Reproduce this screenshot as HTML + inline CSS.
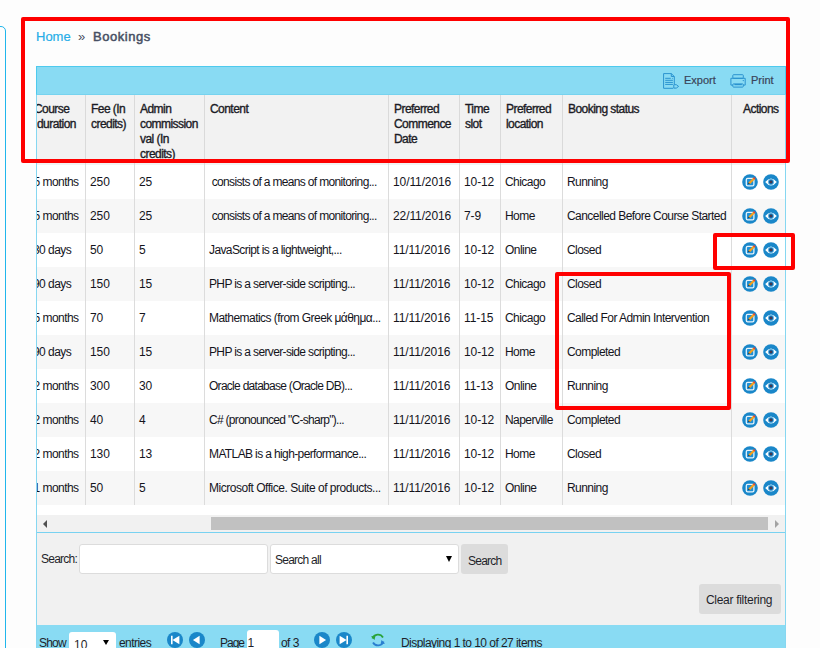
<!DOCTYPE html>
<html><head><meta charset="utf-8">
<style>
*{box-sizing:border-box;margin:0;padding:0}
html,body{width:820px;height:648px;overflow:hidden;background:#fdfdfd;font-family:"Liberation Sans",sans-serif;color:#1f1f2a}
#leftpanel{position:absolute;left:-100px;top:26px;width:106px;height:700px;border:1px solid #20b6ec;border-radius:5px}
#crumb{position:absolute;left:36px;top:29px;font-size:13px;line-height:16px;white-space:nowrap}
#crumb span{position:absolute;top:0}
#box{position:absolute;left:36px;top:66px;width:750px;height:600px;border:1px solid #86d7f1;background:#fff}
#toolbar{position:absolute;left:-1px;top:-1px;width:750px;height:29px;background:#89dbf3;border:1px solid #4ecaee;border-bottom-color:#76d3ef}
.tb{position:absolute;top:7px;font-size:11px;line-height:13px;color:#3a4458;-webkit-text-stroke:0.2px #3a4458;white-space:nowrap}
#viewport{position:absolute;left:0;top:28px;width:748px;height:420px;overflow:hidden;background:#fff}
table{position:absolute;left:-12px;top:0;width:764px;border-collapse:collapse;table-layout:fixed;font-size:12px;letter-spacing:-0.55px}
th{background:#f2f2f2;text-align:left;vertical-align:top;font-weight:normal;padding:6.5px 3px 0 5px;-webkit-text-stroke:0.35px #1b1b25;height:70px;line-height:15px;border-left:1px solid #dadada;color:#1b1b25}
td{height:34px;padding:0 4px;border-left:1px solid #dcdcdc;white-space:nowrap;overflow:hidden;line-height:15px;color:#14141c}
td.n{letter-spacing:-0.1px}
tr.g td{background:#f7f7f7}
#scroll{position:absolute;left:0;top:448px;width:748px;height:17px;background:#f1f1f1}
#thumb{position:absolute;left:174px;top:2px;width:557px;height:13px;background:#c1c1c1}
.arr{position:absolute;top:4.5px;width:0;height:0;border-top:4px solid transparent;border-bottom:4px solid transparent}
#search{position:absolute;left:0;top:465px;width:748px;height:93px;background:#f1f1f1;border-top:1px solid #78d2f1}
#footer{position:absolute;left:0;top:558px;width:748px;height:40px;background:#89dbf3}
.lbl{position:absolute;font-size:12px;line-height:14px;letter-spacing:-0.55px;white-space:nowrap;color:#1f1f2a}
.inp{position:absolute;background:#fff;border:1px solid #dcdcdc;border-radius:3px}
.btn{position:absolute;background:#dcdcdc;border-radius:3px}
.red{position:absolute;border:4px solid #ff0000;border-radius:2px}
.act{display:block;position:absolute}
</style></head><body>
<svg width="0" height="0" style="position:absolute"><defs>
<symbol id="ed" viewBox="0 0 16 16"><circle cx="8" cy="8" r="7.8" fill="#1a87c9"/><rect x="4.3" y="4.4" width="7.6" height="7.5" rx="1.4" fill="#1f90d6" stroke="#e6f4fb" stroke-width="1.3"/><path d="M12.3 4.3L7.3 9.3" stroke="#f6a01a" stroke-width="2.3"/><path d="M11.6 3.6L13 5" stroke="#e0413c" stroke-width="1.6"/><path d="M6.5 8.6L6 10.2L7.8 9.8Z" fill="#333"/></symbol>
<symbol id="ey" viewBox="0 0 16 16"><circle cx="8" cy="8" r="7.8" fill="#1a87c9"/><path d="M2.2 8Q8 0.8 13.8 8Q8 15.2 2.2 8Z" fill="#fff"/><circle cx="8" cy="8" r="2.9" fill="#4aa6dc"/><circle cx="8" cy="8" r="2.1" fill="#155a94"/><circle cx="8" cy="8" r="0.9" fill="#5a2b30"/></symbol>
</defs></svg>
<div id="leftpanel"></div>
<div id="crumb"><span style="left:0;color:#27ade8;-webkit-text-stroke:0.2px #27ade8">Home</span><span style="left:42px;color:#474f63">&raquo;</span><span style="left:57px;color:#474f63;-webkit-text-stroke:0.5px #474f63;letter-spacing:0.55px">Bookings</span></div>
<div id="box">
  <div id="toolbar">
    <svg style="position:absolute;left:625px;top:6px" width="18" height="17" viewBox="0 0 18 17"><g fill="none" stroke="#2a93cf" stroke-width="1"><path d="M12.3 11.2V3.5L9.3 0.6H1.6V15.3H11.2"/><path d="M9.3 0.6V3.5H12.3"/><path d="M3.2 5.3H8.8M3.2 7.3H10.9M3.2 9.4H10.9M3.2 11.4H10.9"/><path d="M11.8 11.7H14.3L16.6 13.4L14.3 15.1H11.8Z"/></g><circle cx="10.4" cy="5.3" r="0.5" fill="#2a93cf"/></svg>
    <span class="tb" style="left:647px">Export</span>
    <svg style="position:absolute;left:693px;top:7px" width="17" height="15" viewBox="0 0 17 15"><g fill="none" stroke="#2a93cf" stroke-width="1"><rect x="2.8" y="0.7" width="10.5" height="3.6" rx="0.8"/><path d="M2.8 11.1H0.9V4.3H15.2V11.1H13.3"/><rect x="2.8" y="9.9" width="10.5" height="3.2" rx="0.8"/><path d="M4.5 10.6H11.8" stroke-width="1.2"/></g><circle cx="13.3" cy="6.6" r="0.7" fill="#2a93cf"/></svg>
    <span class="tb" style="left:714px">Print</span>
  </div>
  <div id="viewport">
    <table>
      <colgroup><col style="width:60px"><col style="width:49px"><col style="width:70px"><col style="width:184px"><col style="width:71px"><col style="width:41px"><col style="width:62px"><col style="width:169px"><col style="width:58px"></colgroup>
      <tr><th><span style="margin-left:3px">Course</span><br><span style="margin-left:6px">duration</span></th><th>Fee (In credits)</th><th>Admin commission val (In credits)</th><th>Content</th><th>Preferred Commence Date</th><th>Time slot</th><th>Preferred location</th><th>Booking status</th><th style="text-align:center;padding-left:0;padding-right:0">Actions</th></tr>
      <tr><td style="padding-left:7.6px">5 months</td><td class="n">250</td><td class="n">25</td><td style="letter-spacing:-0.66px;padding-left:4px">&nbsp;consists of a means of monitoring...</td><td class="n">10/11/2016</td><td class="n">10-12</td><td>Chicago</td><td>Running</td><td></td></tr>
      <tr class="g"><td style="padding-left:7.6px">5 months</td><td class="n">250</td><td class="n">25</td><td style="letter-spacing:-0.66px;padding-left:4px">&nbsp;consists of a means of monitoring...</td><td class="n">22/11/2016</td><td class="n">7-9</td><td>Home</td><td>Cancelled Before Course Started</td><td></td></tr>
      <tr><td style="padding-left:7px">30 days</td><td class="n">50</td><td class="n">5</td><td style="letter-spacing:-0.6px;padding-left:4px">JavaScript is a lightweight,...</td><td class="n">11/11/2016</td><td class="n">10-12</td><td>Online</td><td>Closed</td><td></td></tr>
      <tr class="g"><td style="padding-left:7px">90 days</td><td class="n">150</td><td class="n">15</td><td style="letter-spacing:-0.64px;padding-left:4px">PHP is a server-side scripting...</td><td class="n">11/11/2016</td><td class="n">10-12</td><td>Chicago</td><td>Closed</td><td></td></tr>
      <tr><td style="padding-left:7.6px">5 months</td><td class="n">70</td><td class="n">7</td><td style="letter-spacing:-0.55px;padding-left:4px">Mathematics (from Greek μάθημα...</td><td class="n">11/11/2016</td><td class="n">11-15</td><td>Chicago</td><td>Called For Admin Intervention</td><td></td></tr>
      <tr class="g"><td style="padding-left:7px">90 days</td><td class="n">150</td><td class="n">15</td><td style="letter-spacing:-0.64px;padding-left:4px">PHP is a server-side scripting...</td><td class="n">11/11/2016</td><td class="n">10-12</td><td>Home</td><td>Completed</td><td></td></tr>
      <tr><td style="padding-left:7.6px">2 months</td><td class="n">300</td><td class="n">30</td><td style="letter-spacing:-0.72px;padding-left:4px">Oracle database (Oracle DB)...</td><td class="n">11/11/2016</td><td class="n">11-13</td><td>Online</td><td>Running</td><td></td></tr>
      <tr class="g"><td style="padding-left:7.6px">2 months</td><td class="n">40</td><td class="n">4</td><td style="letter-spacing:-0.7px;padding-left:4px">C# (pronounced "C-sharp")...</td><td class="n">11/11/2016</td><td class="n">10-12</td><td>Naperville</td><td>Completed</td><td></td></tr>
      <tr><td style="padding-left:7.6px">2 months</td><td class="n">130</td><td class="n">13</td><td style="letter-spacing:-0.62px;padding-left:4px">MATLAB is a high-performance...</td><td class="n">11/11/2016</td><td class="n">10-12</td><td>Home</td><td>Closed</td><td></td></tr>
      <tr class="g"><td style="padding-left:7.6px">1 months</td><td class="n">50</td><td class="n">5</td><td style="letter-spacing:-0.48px;padding-left:4px">Microsoft Office. Suite of products...</td><td class="n">11/11/2016</td><td class="n">10-12</td><td>Online</td><td>Running</td><td></td></tr>
    </table>
  </div>
  <div id="scroll"><div class="arr" style="left:6px;border-right:4px solid #505050"></div><div id="thumb"></div><div class="arr" style="left:738px;border-left:4px solid #a3a3a3"></div></div>
  <div id="search">
    <span class="lbl" style="left:4px;top:18.5px;letter-spacing:-0.75px">Search:</span>
    <div class="inp" style="left:42px;top:11px;width:189px;height:30px"></div>
    <div class="inp" style="left:233px;top:11px;width:189px;height:30px"></div>
    <span class="lbl" style="left:238px;top:20px;letter-spacing:-0.75px">Search all</span>
    <div style="position:absolute;left:409px;top:23px;width:0;height:0;border-left:3.2px solid transparent;border-right:3.2px solid transparent;border-top:6px solid #000"></div>
    <div class="btn" style="left:424px;top:11px;width:47px;height:30px"></div>
    <span class="lbl" style="left:431px;top:20.5px;letter-spacing:-0.75px">Search</span>
    <div class="btn" style="left:662px;top:51px;width:82px;height:30px"></div>
    <span class="lbl" style="left:669px;top:60px;letter-spacing:-0.3px">Clear filtering</span>
  </div>
  <div id="footer">
    <span class="lbl" style="left:2px;top:11px;letter-spacing:-0.8px">Show</span>
    <div class="inp" style="left:32px;top:7px;width:47px;height:30px;border:none"></div>
    <span class="lbl" style="left:37px;top:13px;letter-spacing:0">10</span>
    <div style="position:absolute;left:66px;top:14.5px;width:0;height:0;border-left:3px solid transparent;border-right:3px solid transparent;border-top:5.5px solid #000"></div>
    <span class="lbl" style="left:82px;top:11px">entries</span>
    <svg style="position:absolute;left:129px;top:6px" width="18" height="18" viewBox="0 0 18 18"><circle cx="9" cy="9" r="8" fill="#1a87c9"/><path d="M5.8 4.8V13.3" stroke="#fff" stroke-width="1.6"/><path d="M6.4 9L13.4 4.8V13.3Z" fill="#fff"/></svg>
    <svg style="position:absolute;left:151px;top:6px" width="18" height="18" viewBox="0 0 18 18"><circle cx="9" cy="9" r="8" fill="#1a87c9"/><path d="M4.9 9L11.6 4.8V13.3Z" fill="#fff"/></svg>
    <span class="lbl" style="left:183px;top:11px;letter-spacing:-1px">Page</span>
    <div class="inp" style="left:210px;top:5px;width:32px;height:30px;border:none"></div>
    <span class="lbl" style="left:210.5px;top:11px">1</span>
    <span class="lbl" style="left:244px;top:11px">of 3</span>
    <svg style="position:absolute;left:276px;top:6px" width="18" height="18" viewBox="0 0 18 18"><circle cx="9" cy="9" r="8" fill="#1a87c9"/><path d="M13.1 9L6.4 4.8V13.3Z" fill="#fff"/></svg>
    <svg style="position:absolute;left:298px;top:6px" width="18" height="18" viewBox="0 0 18 18"><circle cx="9" cy="9" r="8" fill="#1a87c9"/><path d="M12.2 4.8V13.3" stroke="#fff" stroke-width="1.6"/><path d="M11.6 9L4.6 4.8V13.3Z" fill="#fff"/></svg>
    <svg style="position:absolute;left:333px;top:7px" width="16" height="16" viewBox="0 0 16 16"><path d="M2.5 6.5A5.8 5.8 0 0 1 13 5.5" fill="none" stroke="#2aa33a" stroke-width="1.8"/><path d="M1 4.5L4.5 8L5.5 3.5Z" fill="#2aa33a"/><path d="M13.5 9.5A5.8 5.8 0 0 1 3 10.5" fill="none" stroke="#2a7fd0" stroke-width="1.8"/><path d="M15 11.5L11.5 8L10.5 12.5Z" fill="#2a7fd0"/></svg>
    <span class="lbl" style="left:364px;top:11px">Displaying 1 to 10 of 27 items</span>
  </div>
</div>
<div id="acts"><svg style="position:absolute;left:742px;top:173.8px" width="16" height="16"><use href="#ed"/></svg><svg style="position:absolute;left:763px;top:173.8px" width="16" height="16"><use href="#ey"/></svg>
<svg style="position:absolute;left:742px;top:207.8px" width="16" height="16"><use href="#ed"/></svg><svg style="position:absolute;left:763px;top:207.8px" width="16" height="16"><use href="#ey"/></svg>
<svg style="position:absolute;left:742px;top:241.8px" width="16" height="16"><use href="#ed"/></svg><svg style="position:absolute;left:763px;top:241.8px" width="16" height="16"><use href="#ey"/></svg>
<svg style="position:absolute;left:742px;top:275.8px" width="16" height="16"><use href="#ed"/></svg><svg style="position:absolute;left:763px;top:275.8px" width="16" height="16"><use href="#ey"/></svg>
<svg style="position:absolute;left:742px;top:309.8px" width="16" height="16"><use href="#ed"/></svg><svg style="position:absolute;left:763px;top:309.8px" width="16" height="16"><use href="#ey"/></svg>
<svg style="position:absolute;left:742px;top:343.8px" width="16" height="16"><use href="#ed"/></svg><svg style="position:absolute;left:763px;top:343.8px" width="16" height="16"><use href="#ey"/></svg>
<svg style="position:absolute;left:742px;top:377.8px" width="16" height="16"><use href="#ed"/></svg><svg style="position:absolute;left:763px;top:377.8px" width="16" height="16"><use href="#ey"/></svg>
<svg style="position:absolute;left:742px;top:411.8px" width="16" height="16"><use href="#ed"/></svg><svg style="position:absolute;left:763px;top:411.8px" width="16" height="16"><use href="#ey"/></svg>
<svg style="position:absolute;left:742px;top:445.8px" width="16" height="16"><use href="#ed"/></svg><svg style="position:absolute;left:763px;top:445.8px" width="16" height="16"><use href="#ey"/></svg>
<svg style="position:absolute;left:742px;top:479.8px" width="16" height="16"><use href="#ed"/></svg><svg style="position:absolute;left:763px;top:479.8px" width="16" height="16"><use href="#ey"/></svg>
</div>
<div class="red" style="left:21px;top:17px;width:769px;height:146px"></div>
<div class="red" style="left:713px;top:233px;width:82px;height:37px"></div>
<div class="red" style="left:555px;top:272px;width:176px;height:138px"></div>
</body></html>
